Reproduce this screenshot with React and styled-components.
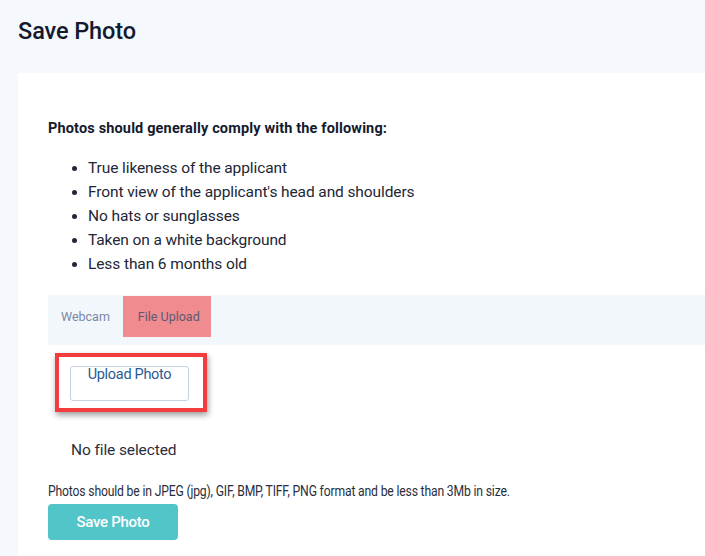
import React from 'react';
import styled, { createGlobalStyle } from 'styled-components';

const GlobalStyle = createGlobalStyle`
  html, body {
    margin: 0;
    padding: 0;
    background: #f5f8fc;
    font-family: Roboto, "Liberation Sans", sans-serif;
    color: #1c2030;
    overflow: hidden;
  }
`;

const Page = styled.div`
  width: 705px;
  height: 556px;
  padding: 16px 0 0 18px;
  box-sizing: border-box;
  overflow: hidden;
`;

const Title = styled.h1`
  margin: 0;
  font-size: 23.5px;
  font-weight: 500;
  line-height: 30px;
  color: #141a2e;
  letter-spacing: -0.1px;
`;

const Card = styled.div`
  margin-top: 27px;
  background: #ffffff;
  border-radius: 4px 0 0 0;
  padding: 46px 0 40px 30px;
  min-height: 500px;
`;

const Heading = styled.p`
  margin: 0;
  font-size: 14.5px;
  font-weight: 700;
  line-height: 20px;
  color: #141a2e;
  letter-spacing: 0.15px;
`;

const List = styled.ul`
  margin: 17px 0 0;
  padding-left: 40px;
  list-style: disc;
`;

const Item = styled.li`
  font-size: 15.5px;
  line-height: 24px;
  color: #222636;
  letter-spacing: -0.1px;
`;

const TabBar = styled.div`
  margin-top: 19px;
  display: flex;
  align-items: flex-start;
  height: 50px;
  background: #f2f7fc;
`;

const Tab = styled.div`
  height: 41px;
  margin-top: 1px;
  padding: ${(p) => (p.$active ? '0 11px 0 15px' : '0 13px 0 13px')};
  display: flex;
  align-items: center;
  font-size: 12.5px;
  font-weight: 400;
  color: ${(p) => (p.$active ? '#5c5a70' : '#7a88a4')};
  background: ${(p) => (p.$active ? '#f08b90' : 'transparent')};
  box-sizing: border-box;
`;

const Highlight = styled.div`
  margin: 8px 0 0 7px;
  width: 152px;
  height: 59px;
  box-sizing: border-box;
  border: 4px solid #f43c3f;
  box-shadow: 1px 3px 6px rgba(0, 0, 0, 0.4);
  padding: 9px 0 0 11px;
`;

const UploadButton = styled.button`
  width: 119px;
  height: 35px;
  box-sizing: border-box;
  border: 1px solid #c5d2e2;
  border-radius: 3px;
  background: #ffffff;
  color: #2a5a92;
  font-family: Roboto, "Liberation Sans", sans-serif;
  font-size: 14.5px;
  font-weight: 400;
  display: flex;
  justify-content: center;
  align-items: flex-start;
  padding: 0;
  line-height: 16px;
  letter-spacing: -0.3px;
`;

const FileNote = styled.p`
  margin: 29px 0 0 23px;
  font-size: 15.5px;
  line-height: 18px;
  color: #2a2e3c;
  letter-spacing: -0.1px;
`;

const FormatNote = styled.p`
  margin: 24px 0 0;
  font-size: 14.5px;
  line-height: 18px;
  color: #2a2e3c;
  letter-spacing: -0.2px;
  white-space: nowrap;
  transform: scaleX(0.84);
  transform-origin: 0 0;
`;

const SaveButton = styled.button`
  margin-top: 3px;
  width: 130px;
  height: 36px;
  border: none;
  border-radius: 4px;
  background: #52c5c9;
  color: #ffffff;
  font-family: Roboto, "Liberation Sans", sans-serif;
  font-size: 15px;
  font-weight: 500;
  letter-spacing: -0.3px;
`;

const rules = [
  'True likeness of the applicant',
  "Front view of the applicant's head and shoulders",
  'No hats or sunglasses',
  'Taken on a white background',
  'Less than 6 months old',
];

export default function App() {
  return (
    <>
      <GlobalStyle />
      <Page>
        <Title>Save Photo</Title>
        <Card>
          <Heading>Photos should generally comply with the following:</Heading>
          <List>
            {rules.map((r) => (
              <Item key={r}>{r}</Item>
            ))}
          </List>
          <TabBar>
            <Tab>Webcam</Tab>
            <Tab $active>File Upload</Tab>
          </TabBar>
          <Highlight>
            <UploadButton>Upload Photo</UploadButton>
          </Highlight>
          <FileNote>No file selected</FileNote>
          <FormatNote>
            Photos should be in JPEG (jpg), GIF, BMP, TIFF, PNG format and be less than 3Mb in size.
          </FormatNote>
          <SaveButton>Save Photo</SaveButton>
        </Card>
      </Page>
    </>
  );
}
